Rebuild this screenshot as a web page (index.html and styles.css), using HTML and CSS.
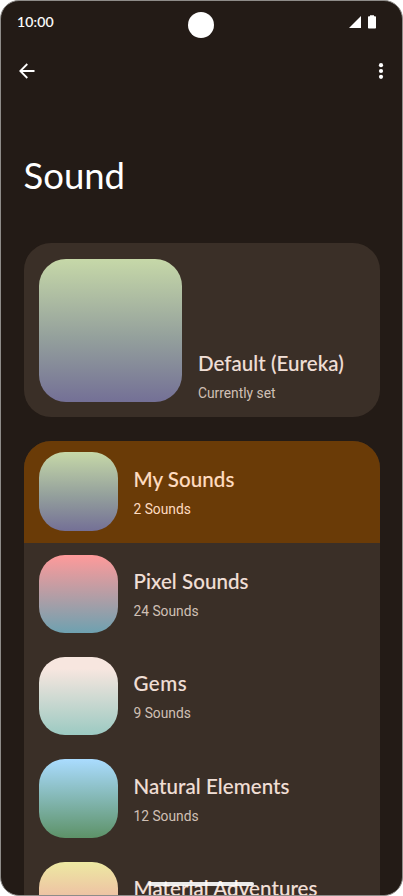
FILE: index.html
```
<!DOCTYPE html>
<html lang="en">
<head>
<meta charset="utf-8">
<title>Sound</title>
<link rel="stylesheet" href="styles.css">
</head>
<body>
<div class="phone">
  <header class="status">
    <span class="time">10:00</span>
    <span class="camera"></span>
    <svg class="indicators" width="28" height="14" viewBox="0 0 28 14"><path d="M0 13 12 1v12z" fill="#fff"/><path d="M21 1.2V.3h4v.9h1.2q.8 0 .8.8v10.8q0 .8-.8.8h-6.4q-.8 0-.8-.8V2q0-.8.8-.8z" fill="#fff"/></svg>
  </header>
  <nav class="toolbar">
    <svg width="16" height="16" viewBox="0 0 16 16"><path d="M15.5 8H1.5M8.3 1 1.3 8l7 7" fill="none" stroke="#fff" stroke-width="1.8"/></svg>
    <svg class="more" width="6" height="18" viewBox="0 0 6 18"><g fill="#fff"><circle cx="3" cy="3.2" r="2.1"/><circle cx="3" cy="9" r="2.1"/><circle cx="3" cy="14.8" r="2.1"/></g></svg>
  </nav>
  <h1>Sound</h1>
  <section class="current">
    <div class="art large eureka"></div>
    <div class="label"><h2>Default (Eureka)</h2><p>Currently set</p></div>
  </section>
  <main class="list">
    <div class="row selected"><div class="art eureka"></div><div class="label"><h2>My Sounds</h2><p>2 Sounds</p></div></div>
    <div class="row"><div class="art pixel"></div><div class="label"><h2>Pixel Sounds</h2><p>24 Sounds</p></div></div>
    <div class="row"><div class="art gems"></div><div class="label"><h2 class="wide">Gems</h2><p>9 Sounds</p></div></div>
    <div class="row"><div class="art natural"></div><div class="label"><h2>Natural Elements</h2><p>12 Sounds</p></div></div>
    <div class="row"><div class="art material"></div><div class="label"><h2>Material Adventures</h2></div></div>
  </main>
  <div class="handle"></div>
</div>
</body>
</html>
```
FILE: styles.css
```
* { box-sizing: border-box; }
body { margin: 0; background: #fff; overflow: hidden; }
.phone {
  position: relative;
  width: 403px;
  height: 896px;
  overflow: hidden;
  border: 1px solid #8e8c89;
  border-radius: 19px;
  background: #231b16;
  color: #fff;
  font-family: Lato, "Liberation Sans", sans-serif;
}
.status {
  display: grid;
  grid-template-columns: 1fr 26px 1fr;
  align-items: center;
  height: 48px;
  padding: 0 25px 0 16px;
}
.time { font: 500 14px/20px Lato, sans-serif; letter-spacing: .15px; -webkit-text-stroke: .1px; margin-top: -6px; }
.camera { width: 26px; height: 26px; border-radius: 50%; background: #fff; margin-left: 4px; }
.indicators { justify-self: end; margin-top: -6px; }
.toolbar {
  display: flex;
  align-items: center;
  justify-content: space-between;
  height: 45px;
  padding: 0 18px 0 18px;
}
.toolbar svg { margin-top: -1px; }
h1 {
  margin: 57px 0 0 22.5px;
  font-size: 36.5px;
  font-weight: 400;
  line-height: 48px;
}
h2 { margin: 0; font-size: 20.5px; font-weight: 500; line-height: 28px; color: #f0dfd6; white-space: nowrap; -webkit-text-stroke: .12px; letter-spacing: .06px; }
.wide { letter-spacing: .5px; }
p { margin: 6px 0 0; font: 400 13.8px/20px Roboto, sans-serif; color: #d0c0b5; }
.current {
  display: flex;
  align-items: flex-end;
  gap: 16px;
  margin: 44px 22.5px 0;
  height: 174px;
  padding: 0 0 15.5px 15.5px;
  border-radius: 27px;
  background: #3a2f27;
}
.current .label { margin-bottom: -1.5px; }
.art { flex: none; width: 78.5px; height: 78.5px; border-radius: 26px; }
.art.large { width: 143px; height: 143px; border-radius: 27px; }
.eureka { background: linear-gradient(#c6d8a8, #94a09c 55%, #747096); }
.pixel { background: linear-gradient(#ff9a9a, #6ea1b0); }
.gems { background: linear-gradient(#f7e6df 15%, #9ccac2); }
.natural { background: linear-gradient(#aadcff, #5d9268); }
.material { background: linear-gradient(#ede9a2, #eec1a4 45%, #ee9a9a); }
.list {
  margin: 23.5px 22.5px 0;
  border-radius: 27px 27px 0 0;
  overflow: hidden;
  background: #3a2f27;
}
.row { display: flex; align-items: center; gap: 16px; height: 102.3px; padding-left: 15.5px; }
.row .label { height: 54px; }
.selected { background: #6a3b07; }
.selected h2, .selected p { color: #ffdcc0; }
.handle {
  position: absolute;
  left: 147px;
  top: 881px;
  width: 106px;
  height: 4px;
  border-radius: 2px;
  background: rgba(255,255,255,.9);
}
```
